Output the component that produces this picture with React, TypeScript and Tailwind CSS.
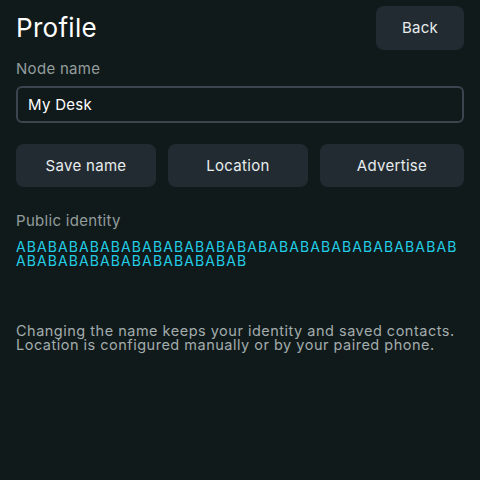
export default function App() {
  const identity = 'AB'.repeat(32)

  return (
    <div className="w-[480px] h-[480px] bg-[#111a1b] px-4 font-['Inter',sans-serif] text-white">
      <div className="flex items-center justify-between pt-1.5">
        <h1 className="text-[26px] leading-none font-normal tracking-[0.3px]">Profile</h1>
        <button className="h-11 w-[88px] rounded-lg bg-[#222b32] text-[15px] tracking-[0.3px] text-[#e8eced]">
          Back
        </button>
      </div>

      <div className="mt-[9px] text-[15px] leading-5 tracking-[0.3px] text-[#939d9d]">Node name</div>
      <input
        className="mt-[7px] block h-[37px] w-full rounded-md border-2 border-[#3a4550] bg-transparent px-[10px] text-[15px] tracking-[0.3px] text-white outline-none"
        defaultValue="My Desk"
      />

      <div className="mt-[21px] flex gap-3">
        <button className="h-[43px] w-[140px] rounded-lg bg-[#222b32] pt-0.5 text-[15px] tracking-[0.3px] text-[#e8eced]">
          Save name
        </button>
        <button className="h-[43px] w-[140px] rounded-lg bg-[#222b32] pt-0.5 text-[15px] tracking-[0.3px] text-[#e8eced]">
          Location
        </button>
        <button className="h-[43px] flex-1 rounded-lg bg-[#222b32] pt-0.5 text-[15px] tracking-[0.3px] text-[#e8eced]">
          Advertise
        </button>
      </div>

      <div className="mt-6 text-[15px] leading-5 tracking-[0.3px] text-[#939d9d]">Public identity</div>
      <div className="mt-[9px] break-all text-[14px] leading-[14px] tracking-[1.1px] text-[#22cde6]">
        {identity}
      </div>

      <p className="mt-[56px] text-[14.5px] leading-[14px] tracking-[0.5px] text-[#a2acac]">
        Changing the name keeps your identity and saved contacts. Location is configured manually or by your paired phone.
      </p>
    </div>
  )
}
